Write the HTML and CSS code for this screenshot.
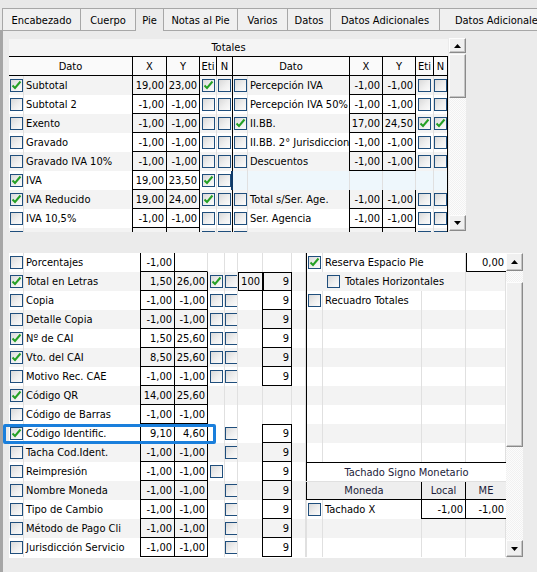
FILE: index.html
```html
<!DOCTYPE html>
<html>
<head>
<meta charset="utf-8">
<link rel="stylesheet" href="styles.css">
</head>
<body>
<div class="tabs">
  <div class="tab w1">Encabezado</div>
  <div class="tab w2">Cuerpo</div>
  <div class="tab w3 active">Pie</div>
  <div class="tab w4">Notas al Pie</div>
  <div class="tab w5">Varios</div>
  <div class="tab w6">Datos</div>
  <div class="tab w7">Datos Adicionales</div>
  <div class="tab w8">Datos Adicionales</div>
</div>
<div class="panel">
  <div class="top">
    <div class="tg">
      <div class="ttl">Totales</div>
      <div class="tr th">
        <span class="c h s2">Dato</span><span class="c h">X</span><span class="c h">Y</span><span class="c h">Eti</span><span class="c h">N</span>
        <span class="c h s2">Dato</span><span class="c h">X</span><span class="c h">Y</span><span class="c h">Eti</span><span class="c h">N</span>
      </div>
      <div class="tr s">
        <span class="c k"><i class="cb on"><svg viewBox="0 0 11 11"><path d="M1.5 5.5l2.5 2.5L9.5 1.5"/></svg></i></span><span class="c t bk">Subtotal</span><span class="c n">19,00</span><span class="c n">23,00</span><span class="c k"><i class="cb on"><svg viewBox="0 0 11 11"><path d="M1.5 5.5l2.5 2.5L9.5 1.5"/></svg></i></span><span class="c k dv"><i class="cb"></i></span>
        <span class="c k"><i class="cb"></i></span><span class="c t bk">Percepción IVA</span><span class="c n">-1,00</span><span class="c n">-1,00</span><span class="c k"><i class="cb"></i></span><span class="c k dv"><i class="cb"></i></span>
      </div>
      <div class="tr">
        <span class="c k"><i class="cb"></i></span><span class="c t bk">Subtotal 2</span><span class="c n">-1,00</span><span class="c n">-1,00</span><span class="c k"><i class="cb"></i></span><span class="c k dv"><i class="cb"></i></span>
        <span class="c k"><i class="cb"></i></span><span class="c t bk">Percepción IVA 50%</span><span class="c n">-1,00</span><span class="c n">-1,00</span><span class="c k"><i class="cb"></i></span><span class="c k dv"><i class="cb"></i></span>
      </div>
      <div class="tr s">
        <span class="c k"><i class="cb"></i></span><span class="c t bk">Exento</span><span class="c n">-1,00</span><span class="c n">-1,00</span><span class="c k"><i class="cb"></i></span><span class="c k dv"><i class="cb"></i></span>
        <span class="c k"><i class="cb on"><svg viewBox="0 0 11 11"><path d="M1.5 5.5l2.5 2.5L9.5 1.5"/></svg></i></span><span class="c t bk">II.BB.</span><span class="c n">17,00</span><span class="c n">24,50</span><span class="c k"><i class="cb on"><svg viewBox="0 0 11 11"><path d="M1.5 5.5l2.5 2.5L9.5 1.5"/></svg></i></span><span class="c k dv"><i class="cb on"><svg viewBox="0 0 11 11"><path d="M1.5 5.5l2.5 2.5L9.5 1.5"/></svg></i></span>
      </div>
      <div class="tr">
        <span class="c k"><i class="cb"></i></span><span class="c t bk">Gravado</span><span class="c n">-1,00</span><span class="c n">-1,00</span><span class="c k"><i class="cb"></i></span><span class="c k dv"><i class="cb"></i></span>
        <span class="c k"><i class="cb"></i></span><span class="c t bk">II.BB. 2° Jurisdiccion</span><span class="c n">-1,00</span><span class="c n">-1,00</span><span class="c k"><i class="cb"></i></span><span class="c k dv"><i class="cb"></i></span>
      </div>
      <div class="tr s">
        <span class="c k"><i class="cb"></i></span><span class="c t bk">Gravado IVA 10%</span><span class="c n">-1,00</span><span class="c n">-1,00</span><span class="c k"><i class="cb"></i></span><span class="c k dv"><i class="cb"></i></span>
        <span class="c k"><i class="cb"></i></span><span class="c t bk">Descuentos</span><span class="c n">-1,00</span><span class="c n">-1,00</span><span class="c k"><i class="cb"></i></span><span class="c k dv"><i class="cb"></i></span>
      </div>
      <div class="tr">
        <span class="c k"><i class="cb on"><svg viewBox="0 0 11 11"><path d="M1.5 5.5l2.5 2.5L9.5 1.5"/></svg></i></span><span class="c t bk">IVA</span><span class="c n">19,00</span><span class="c n">23,50</span><span class="c k"><i class="cb on"><svg viewBox="0 0 11 11"><path d="M1.5 5.5l2.5 2.5L9.5 1.5"/></svg></i></span><span class="c k dv sel"><i class="cb"></i></span>
        <span class="c k hl"></span><span class="c t hl"></span><span class="c hl"></span><span class="c hl"></span><span class="c hl"></span><span class="c dv hl"></span>
      </div>
      <div class="tr s">
        <span class="c k"><i class="cb on"><svg viewBox="0 0 11 11"><path d="M1.5 5.5l2.5 2.5L9.5 1.5"/></svg></i></span><span class="c t bk">IVA Reducido</span><span class="c n">19,00</span><span class="c n">24,00</span><span class="c k"><i class="cb on"><svg viewBox="0 0 11 11"><path d="M1.5 5.5l2.5 2.5L9.5 1.5"/></svg></i></span><span class="c k dv"><i class="cb"></i></span>
        <span class="c k"><i class="cb"></i></span><span class="c t bk">Total s/Ser. Age.</span><span class="c n">-1,00</span><span class="c n">-1,00</span><span class="c k"><i class="cb"></i></span><span class="c k dv"><i class="cb"></i></span>
      </div>
      <div class="tr">
        <span class="c k"><i class="cb"></i></span><span class="c t bk">IVA 10,5%</span><span class="c n">-1,00</span><span class="c n">-1,00</span><span class="c k"><i class="cb"></i></span><span class="c k dv"><i class="cb"></i></span>
        <span class="c k"><i class="cb"></i></span><span class="c t bk">Ser. Agencia</span><span class="c n">-1,00</span><span class="c n">-1,00</span><span class="c k"><i class="cb"></i></span><span class="c k dv"><i class="cb"></i></span>
      </div>
      <div class="tr s">
        <span class="c k"><i class="cb"></i></span><span class="c t bk"></span><span class="c n"></span><span class="c n"></span><span class="c k"><i class="cb"></i></span><span class="c k dv"><i class="cb"></i></span>
        <span class="c k"><i class="cb"></i></span><span class="c t bk"></span><span class="c n"></span><span class="c n"></span><span class="c k"><i class="cb"></i></span><span class="c k dv"><i class="cb"></i></span>
      </div>
    </div>
    <div class="sb sbt">
      <div class="btn bu"><svg width="7" height="4" viewBox="0 0 7 4"><path d="M0 4h7L3.5 0z"/></svg></div>
      <div class="thumb tt"></div>
      <div class="track"></div>
      <div class="btn bd"><svg width="7" height="4" viewBox="0 0 7 4"><path d="M0 0h7L3.5 4z"/></svg></div>
    </div>
  </div>

  <div class="bottom">
    <div class="bl">
      <div class="br0">
        <span class="c k"><i class="cb"></i></span><span class="c t bk">Porcentajes</span><span class="c n">-1,00</span><span class="c ub"></span><span class="c"></span><span class="c"></span><span class="c"></span><span class="c"></span><span class="c"></span>
      </div>
      <div class="br0 s">
        <span class="c k"><i class="cb on"><svg viewBox="0 0 11 11"><path d="M1.5 5.5l2.5 2.5L9.5 1.5"/></svg></i></span><span class="c t bk">Total en Letras</span><span class="c n">1,50</span><span class="c n">26,00</span><span class="c k"><i class="cb on"><svg viewBox="0 0 11 11"><path d="M1.5 5.5l2.5 2.5L9.5 1.5"/></svg></i></span><span class="c k"><i class="cb"></i></span><span class="c n bx tp">100</span><span class="c n bx tp">9</span><span class="c"></span>
      </div>
      <div class="br0">
        <span class="c k"><i class="cb"></i></span><span class="c t bk">Copia</span><span class="c n">-1,00</span><span class="c n">-1,00</span><span class="c k"><i class="cb"></i></span><span class="c k"><i class="cb"></i></span><span class="c bkr"></span><span class="c n">9</span><span class="c"></span>
      </div>
      <div class="br0 s">
        <span class="c k"><i class="cb"></i></span><span class="c t bk">Detalle Copia</span><span class="c n">-1,00</span><span class="c n">-1,00</span><span class="c k"><i class="cb"></i></span><span class="c k"><i class="cb"></i></span><span class="c bkr"></span><span class="c n">9</span><span class="c"></span>
      </div>
      <div class="br0">
        <span class="c k"><i class="cb on"><svg viewBox="0 0 11 11"><path d="M1.5 5.5l2.5 2.5L9.5 1.5"/></svg></i></span><span class="c t bk">Nº de CAI</span><span class="c n">1,50</span><span class="c n">25,60</span><span class="c k"><i class="cb"></i></span><span class="c k"><i class="cb"></i></span><span class="c bkr"></span><span class="c n">9</span><span class="c"></span>
      </div>
      <div class="br0 s">
        <span class="c k"><i class="cb on"><svg viewBox="0 0 11 11"><path d="M1.5 5.5l2.5 2.5L9.5 1.5"/></svg></i></span><span class="c t bk">Vto. del CAI</span><span class="c n">8,50</span><span class="c n">25,60</span><span class="c k"><i class="cb"></i></span><span class="c k"><i class="cb"></i></span><span class="c bkr"></span><span class="c n">9</span><span class="c"></span>
      </div>
      <div class="br0">
        <span class="c k"><i class="cb"></i></span><span class="c t bk">Motivo Rec. CAE</span><span class="c n">-1,00</span><span class="c n">-1,00</span><span class="c k"><i class="cb"></i></span><span class="c k"><i class="cb"></i></span><span class="c bkr"></span><span class="c n">9</span><span class="c"></span>
      </div>
      <div class="br0 s">
        <span class="c k"><i class="cb on"><svg viewBox="0 0 11 11"><path d="M1.5 5.5l2.5 2.5L9.5 1.5"/></svg></i></span><span class="c t bk">Código QR</span><span class="c n">14,00</span><span class="c n">25,60</span><span class="c"></span><span class="c"></span><span class="c"></span><span class="c"></span><span class="c"></span>
      </div>
      <div class="br0">
        <span class="c k"><i class="cb"></i></span><span class="c t bk">Código de Barras</span><span class="c n">-1,00</span><span class="c n">-1,00</span><span class="c"></span><span class="c"></span><span class="c"></span><span class="c"></span><span class="c"></span>
      </div>
      <div class="br0">
        <span class="c k"><i class="cb on"><svg viewBox="0 0 11 11"><path d="M1.5 5.5l2.5 2.5L9.5 1.5"/></svg></i></span><span class="c t bk">Código Identific.</span><span class="c n">9,10</span><span class="c n">4,60</span><span class="c"></span><span class="c k"><i class="cb"></i></span><span class="c bkr"></span><span class="c n tp">9</span><span class="c"></span>
      </div>
      <div class="br0 s">
        <span class="c k"><i class="cb"></i></span><span class="c t bk">Tacha Cod.Ident.</span><span class="c n">-1,00</span><span class="c n">-1,00</span><span class="c"></span><span class="c k"><i class="cb"></i></span><span class="c bkr"></span><span class="c n">9</span><span class="c"></span>
      </div>
      <div class="br0">
        <span class="c k"><i class="cb"></i></span><span class="c t bk">Reimpresión</span><span class="c n">-1,00</span><span class="c n">-1,00</span><span class="c k"><i class="cb"></i></span><span class="c"></span><span class="c bkr"></span><span class="c n">9</span><span class="c"></span>
      </div>
      <div class="br0 s">
        <span class="c k"><i class="cb"></i></span><span class="c t bk">Nombre Moneda</span><span class="c n">-1,00</span><span class="c n">-1,00</span><span class="c"></span><span class="c k"><i class="cb"></i></span><span class="c bkr"></span><span class="c n">9</span><span class="c"></span>
      </div>
      <div class="br0">
        <span class="c k"><i class="cb"></i></span><span class="c t bk">Tipo de Cambio</span><span class="c n">-1,00</span><span class="c n">-1,00</span><span class="c"></span><span class="c k"><i class="cb"></i></span><span class="c bkr"></span><span class="c n">9</span><span class="c"></span>
      </div>
      <div class="br0 s">
        <span class="c k"><i class="cb"></i></span><span class="c t bk">Método de Pago Cli</span><span class="c n">-1,00</span><span class="c n">-1,00</span><span class="c"></span><span class="c k"><i class="cb"></i></span><span class="c bkr"></span><span class="c n">9</span><span class="c"></span>
      </div>
      <div class="br0">
        <span class="c k"><i class="cb"></i></span><span class="c t bk">Jurisdicción Servicio</span><span class="c n">-1,00</span><span class="c n">-1,00</span><span class="c"></span><span class="c k"><i class="cb"></i></span><span class="c bkr"></span><span class="c n">9</span><span class="c"></span>
      </div>
    </div>

    <div class="brt">
      <div class="rr">
        <span class="c k lb"><i class="cb on"><svg viewBox="0 0 11 11"><path d="M1.5 5.5l2.5 2.5L9.5 1.5"/></svg></i></span><span class="c t w2c">Reserva Espacio Pie</span><span class="c n vl">0,00</span>
      </div>
      <div class="rr s">
        <span class="c lb nr"></span><span class="c ind w2c"><i class="cb"></i><span class="lbl">Totales Horizontales</span></span><span class="c"></span>
      </div>
      <div class="rr">
        <span class="c k lb"><i class="cb"></i></span><span class="c t">Recuadro Totales</span><span class="c"></span><span class="c"></span>
      </div>
      <div class="rr s"><span class="c lb"></span><span class="c"></span><span class="c"></span><span class="c"></span></div>
      <div class="rr"><span class="c lb"></span><span class="c"></span><span class="c"></span><span class="c"></span></div>
      <div class="rr s"><span class="c lb"></span><span class="c"></span><span class="c"></span><span class="c"></span></div>
      <div class="rr"><span class="c lb"></span><span class="c"></span><span class="c"></span><span class="c"></span></div>
      <div class="rr s"><span class="c lb"></span><span class="c"></span><span class="c"></span><span class="c"></span></div>
      <div class="rr"><span class="c lb"></span><span class="c"></span><span class="c"></span><span class="c"></span></div>
      <div class="rr s"><span class="c lb"></span><span class="c"></span><span class="c"></span><span class="c"></span></div>
      <div class="rr"><span class="c lb"></span><span class="c"></span><span class="c"></span><span class="c"></span></div>
      <div class="rr tsh"><span class="c hd">Tachado Signo Monetario</span></div>
      <div class="rr msh"><span class="c hd lb bk w2c">Moneda</span><span class="c hd bk">Local</span><span class="c hd">ME</span></div>
      <div class="rr">
        <span class="c k lb2"><i class="cb"></i></span><span class="c t bk">Tachado X</span><span class="c n">-1,00</span><span class="c n nrb">-1,00</span>
      </div>
      <div class="rr s"><span class="c lb2"></span><span class="c"></span><span class="c"></span><span class="c"></span></div>
      <div class="rr"><span class="c lb2"></span><span class="c"></span><span class="c"></span><span class="c"></span></div>
    </div>

    <div class="sb sbb">
      <div class="btn bu2"><svg width="7" height="4" viewBox="0 0 7 4"><path d="M0 4h7L3.5 0z"/></svg></div>
      <div class="track t1"></div>
      <div class="thumb tb"></div>
      <div class="track"></div>
      <div class="btn bd2"><svg width="7" height="4" viewBox="0 0 7 4"><path d="M0 0h7L3.5 4z"/></svg></div>
    </div>
  </div>
</div>
<div class="focus"></div>
</body>
</html>
```

FILE: styles.css
```css
* { box-sizing: border-box; }
html, body { margin: 0; padding: 0; }
body {
  width: 537px;
  height: 572px;
  overflow: hidden;
  background: #e8e8e8;
  font-family: "DejaVu Sans Condensed", "DejaVu Sans", sans-serif;
  font-stretch: semi-condensed;
  font-size: 11px;
  color: #000;
  position: relative;
}

/* tabs */
.tabs {
  display: flex;
  align-items: flex-end;
  height: 30px;
  padding-left: 2px;
  white-space: nowrap;
}
.tab {
  height: 22px;
  border: 1px solid #a7a7a7;
  border-bottom: none;
  background: #f0f0f0;
  margin-right: -1px;
  display: flex;
  align-items: center;
  justify-content: center;
  flex: none;
  font-size: 11px;
  padding-top: 1px;
}
.tab.active {
  height: 23px;
  margin-bottom: -1px;
  background: #ebebeb;
  position: relative;
  z-index: 2;
}
.w1 { width: 79px; }
.w2 { width: 56px; }
.w3 { width: 29px; }
.w4 { width: 75px; }
.w5 { width: 51px; }
.w6 { width: 44px; }
.w7 { width: 110px; }
.w8 { width: 120px; }

.panel {
  border-left: 3px solid #a6a6a6;
  border-top: 1px solid #a7a7a7;
  background: #ebebeb;
  height: 542px;
  padding: 7px 0 0 6px;
}

/* top grid */
.top {
  display: flex;
  height: 194px;
}
.tg {
  width: 439px;
  margin-top: 1px;
  height: 193px;
  overflow: hidden;
  background: #fff;
}
.ttl {
  height: 18px;
  border-bottom: 1px solid #000;
  background: #f4f4f4;
  display: flex;
  align-items: center;
  justify-content: center;
}
.tr {
  display: grid;
  grid-template-columns: 15px 109px 34px 33px 17px 16px 15px 102px 33px 33px 18px 14px;
  height: 19px;
  background: #fff;
}
.tr.th {
  background: #fafafa;
  border-bottom: 1px solid #000;
}
.s { background: #f3f3f3; }

.c {
  border-right: 1px solid #e0e0e0;
  display: flex;
  align-items: center;
  overflow: hidden;
  white-space: nowrap;
  min-width: 0;
}
.h {
  justify-content: center;
  border-right-color: #000;
}
.s2 { grid-column: span 2; }
.t { padding-left: 2px; }
.k { justify-content: center; }
.bk { border-right-color: #000; }
.dv { border-right-color: #000; }
.bkr { border-right-color: #000; }
.n {
  justify-content: flex-end;
  padding-right: 2px;
  border-right-color: #000;
  border-bottom: 1px solid #000;
}
.ub { border-bottom: 1px solid #000; }
.bx { border-left: 1px solid #000; }
.tp { border-top: 1px solid #000; }
.hl { background: #eef7fc; }
.sel { border-right: 2px solid #0f3a68; }

/* checkbox */
.cb {
  display: block;
  width: 13px;
  height: 13px;
  flex: none;
  border: 1px solid #1f4e7c;
  background: linear-gradient(135deg, #d9d9d9 0%, #efefef 55%, #fbfbfb 100%);
}
.cb svg {
  display: block;
  width: 11px;
  height: 11px;
}
.cb svg path {
  fill: none;
  stroke: #25a025;
  stroke-width: 2;
}

/* scrollbars */
.sb {
  display: flex;
  flex-direction: column;
  flex: none;
}
.sbt { width: 18px; height: 194px; padding-left: 1px; }
.btn {
  flex: none;
  background: #f0f0f0;
  border: 1px solid;
  border-color: #fdfdfd #8a8a8a #8a8a8a #fdfdfd;
  box-shadow: inset -1px -1px 0 #c4c4c4;
  display: flex;
  align-items: center;
  justify-content: center;
}
.btn svg path { fill: #000; }
.bu { height: 15px; margin-bottom: 1px; }
.bd { height: 16px; margin-bottom: 1px; }
.thumb {
  flex: none;
  background: #f0f0f0;
  border: 1px solid;
  border-color: #fdfdfd #8a8a8a #8a8a8a #fdfdfd;
  box-shadow: inset -1px -1px 0 #c4c4c4;
}
.tt { height: 44px; }
.track {
  flex: 1;
  background: repeating-conic-gradient(#f1f1f1 0 25%, #fcfcfc 0 50%) 0 0 / 2px 2px;
}
.t1 { flex: none; height: 11px; }
.tb { height: 165px; }
.sbb { width: 17px; height: 305px; }
.bu2 { height: 18px; }
.bd2 { height: 17px; margin-bottom: 1px; }

/* bottom */
.bottom {
  display: flex;
  margin-top: 21px;
  height: 305px;
}
.bl {
  width: 297px;
  flex: none;
  background: #fff;
}
.br0 {
  display: grid;
  grid-template-columns: 15px 117px 34px 33px 17px 13px 25px 29px 14px;
  height: 19px;
  background: #fff;
}
.br0.s { background: #f3f3f3; }

.brt {
  width: 200px;
  flex: none;
  background: #fff;
}
.rr {
  display: grid;
  grid-template-columns: 17px 99px 44px 40px;
  height: 19px;
  background: #fff;
}
.rr.s { background: #f3f3f3; }
.rr .w2c { grid-column: span 2; }
.lb { border-left: 1px solid #000; }
.lb2 { border-left: 1px solid #e0e0e0; }
.nr { border-right: none; }
.ind { padding-left: 4px; }
.lbl { margin-left: 5px; }
.vl { border-left: 1px solid #000; border-right: none; }
.nrb { border-right: none; }
.tsh {
  grid-template-columns: 200px;
  border-top: 1px solid #000;
  background: #fff;
}
.tsh .hd { border-left: 1px solid #000; border-right: none; }
.msh {
  background: #eeeeee;
  border-top: 1px solid #e0e0e0;
  border-bottom: 1px solid #000;
}
.hd { justify-content: center; color: #1c1c3a; }
.msh .hd:last-child { border-right: none; }

.focus {
  position: absolute;
  left: 3px;
  top: 424px;
  width: 213px;
  height: 20px;
  border: 3px solid #1a7fdc;
  border-radius: 2px;
}
```
